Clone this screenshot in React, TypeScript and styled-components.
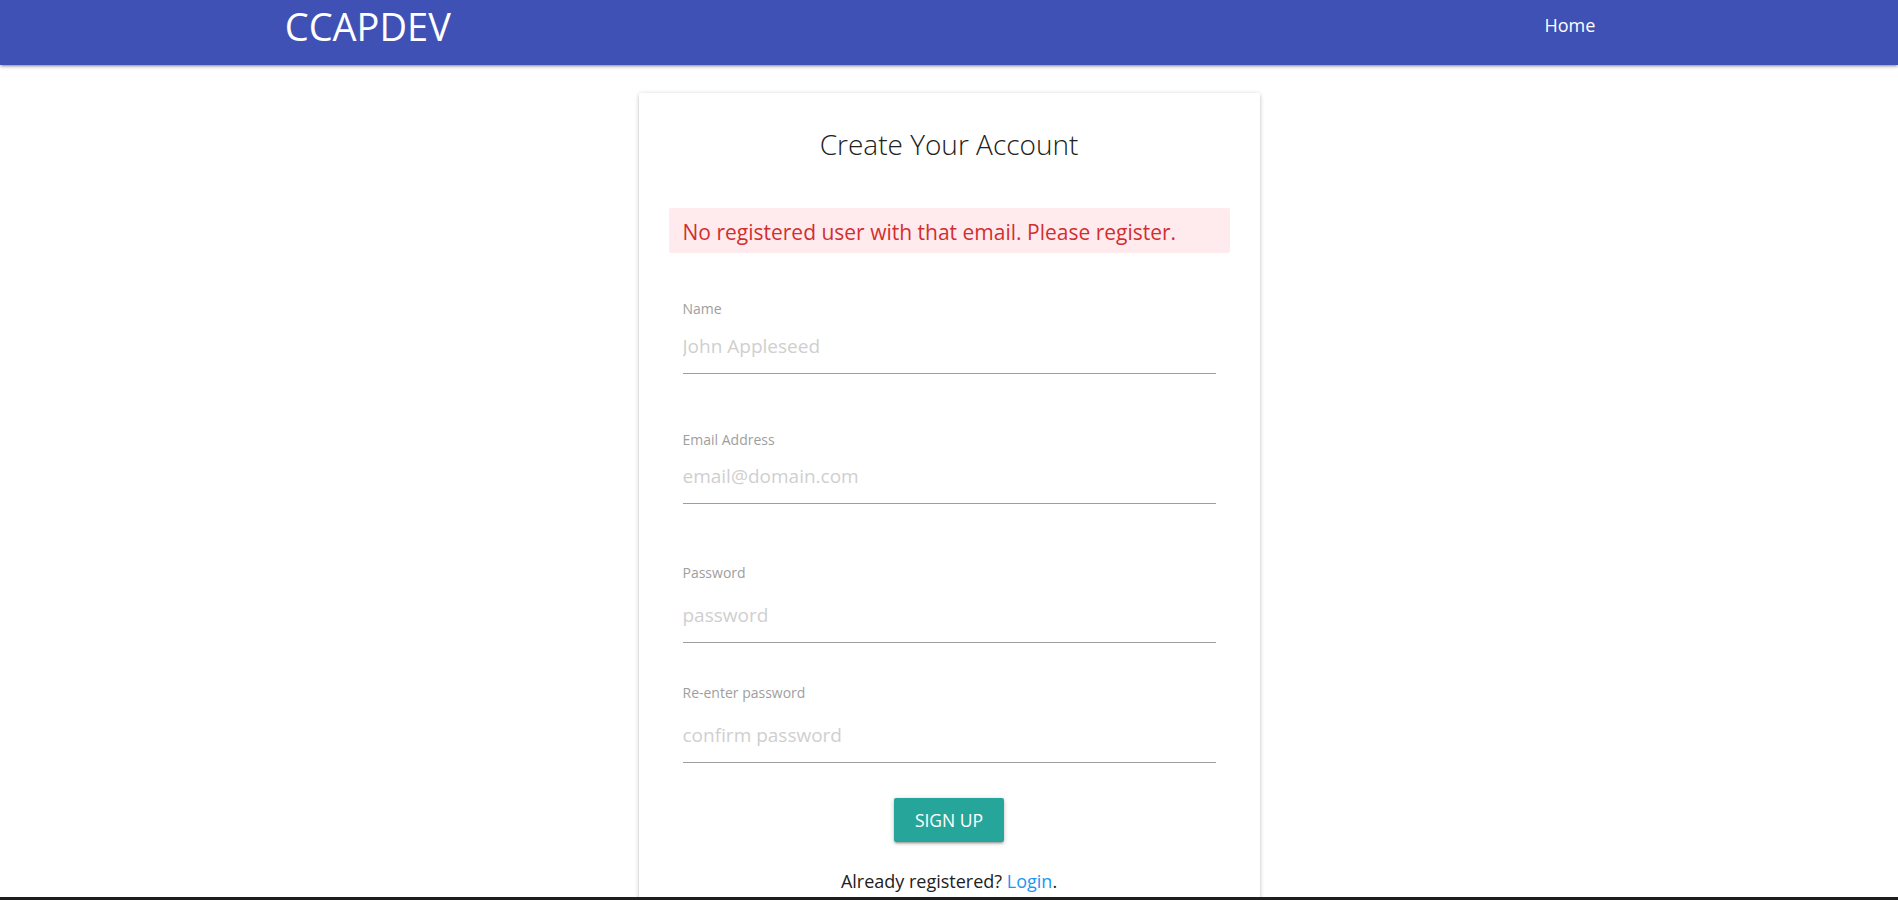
import React from "react";
import styled, { createGlobalStyle } from "styled-components";

const GlobalStyle = createGlobalStyle`
  html, body {
    margin: 0;
    padding: 0;
    background: #ffffff;
    overflow: hidden;
  }
  body {
    font-family: "Open Sans", "Noto Sans", sans-serif;
    color: #212121;
  }
  *, *::before, *::after {
    box-sizing: border-box;
  }
`;

const depth1 =
  "0 2px 2px 0 rgba(0,0,0,0.14), 0 3px 1px -2px rgba(0,0,0,0.12), 0 1px 5px 0 rgba(0,0,0,0.2)";

const Nav = styled.nav`
  position: relative;
  z-index: 1;
  height: 65px;
  background: #3f51b5;
  box-shadow: ${depth1};
`;

const NavInner = styled.div`
  width: 70%;
  height: 100%;
  margin: 0 auto;
  display: flex;
  justify-content: space-between;
  align-items: flex-start;
`;

const Brand = styled.a`
  padding-top: 7px;
  font-size: 38px;
  line-height: 1;
  color: #ffffff;
  text-decoration: none;
`;

const NavLink = styled.a`
  padding: 16px 18px 0;
  font-size: 18px;
  line-height: 1;
  color: #ffffff;
  text-decoration: none;
`;

const Main = styled.main`
  display: flex;
  justify-content: center;
  padding-top: 28px;
`;

const Card = styled.section`
  width: 621px;
  padding: 35px 30px 30px;
  background: #ffffff;
  border-radius: 2px;
  box-shadow: ${depth1};
`;

const Title = styled.h4`
  margin: 0;
  font-size: 28px;
  font-weight: 300;
  line-height: 1.2;
  text-align: center;
  color: #212121;
`;

const Alert = styled.div`
  margin-top: 46px;
  padding: 11px 15px 7px 14px;
  background: #ffebee;
  color: #d32f2f;
  font-size: 21px;
  line-height: 1.3;
  border-radius: 2px;
`;

const Form = styled.form`
  display: flex;
  flex-direction: column;
  padding: 0 14px;
`;

const Field = styled.div<{ $top: number }>`
  display: flex;
  flex-direction: column;
  margin-top: ${(p) => p.$top}px;
`;

const Label = styled.label<{ $gap: number }>`
  margin-bottom: ${(p) => p.$gap}px;
  font-size: 14px;
  line-height: 1.2;
  color: #9e9e9e;
`;

const Input = styled.input`
  width: 100%;
  height: 45px;
  padding: 0 0 10px;
  border: none;
  border-bottom: 1px solid #9e9e9e;
  border-radius: 0;
  background: transparent;
  font-family: inherit;
  font-size: 19px;
  color: #212121;
  outline: none;

  &::placeholder {
    color: #cfcfcf;
    opacity: 1;
  }
`;

const Actions = styled.div`
  display: flex;
  justify-content: center;
  margin-top: 35px;
`;

const Button = styled.button`
  height: 44px;
  padding: 0 21px;
  border: none;
  border-radius: 2px;
  background: #26a69a;
  color: #ffffff;
  font-family: inherit;
  font-size: 17.5px;
  line-height: 44px;
  box-shadow: ${depth1};
  cursor: pointer;
`;

const Footer = styled.p`
  margin: 26px 0 0;
  font-size: 18px;
  line-height: 1.5;
  text-align: center;
  color: #212121;
`;

const Link = styled.a`
  color: #2196f3;
  text-decoration: none;
`;

const BottomEdge = styled.div`
  position: fixed;
  left: 0;
  right: 0;
  bottom: 0;
  height: 3px;
  background: #1e1e1e;
`;

const fields = [
  { id: "name", label: "Name", placeholder: "John Appleseed", type: "text", top: 48, gap: 11 },
  { id: "email", label: "Email Address", placeholder: "email@domain.com", type: "email", top: 58, gap: 11 },
  { id: "password", label: "Password", placeholder: "password", type: "password", top: 61, gap: 16 },
  { id: "confirm", label: "Re-enter password", placeholder: "confirm password", type: "password", top: 42, gap: 16 },
];

export default function App() {
  return (
    <>
      <GlobalStyle />
      <Nav>
        <NavInner>
          <Brand href="#">CCAPDEV</Brand>
          <NavLink href="#">Home</NavLink>
        </NavInner>
      </Nav>
      <Main>
        <Card>
          <Title>Create Your Account</Title>
          <Alert>No registered user with that email. Please register.</Alert>
          <Form onSubmit={(e) => e.preventDefault()}>
            {fields.map((f) => (
              <Field key={f.id} $top={f.top}>
                <Label htmlFor={f.id} $gap={f.gap}>
                  {f.label}
                </Label>
                <Input id={f.id} type={f.type} placeholder={f.placeholder} />
              </Field>
            ))}
            <Actions>
              <Button type="submit">SIGN UP</Button>
            </Actions>
            <Footer>
              Already registered? <Link href="#">Login</Link>.
            </Footer>
          </Form>
        </Card>
      </Main>
      <BottomEdge />
    </>
  );
}
